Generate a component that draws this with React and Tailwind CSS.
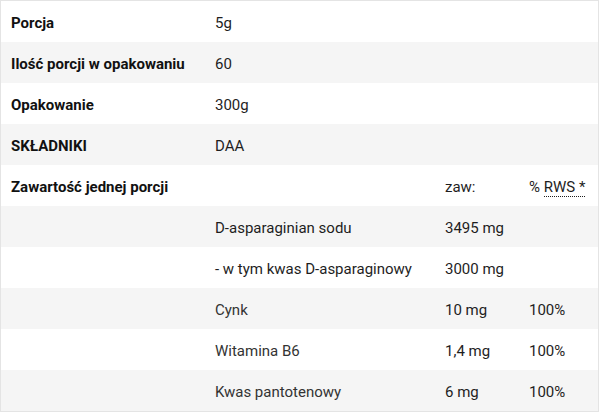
import React from "react";

const rows = [
  { a: "Porcja", b: "5g", bold: true },
  { a: "Ilość porcji w opakowaniu", b: "60", bold: true },
  { a: "Opakowanie", b: "300g", bold: true },
  { a: "SKŁADNIKI", b: "DAA", bold: true },
  { a: "Zawartość jednej porcji", b: "", c: "zaw:", d: "rws", bold: true },
  { a: "", b: "D-asparaginian sodu", c: "3495 mg", d: "" },
  { a: "", b: "- w tym kwas D-asparaginowy", c: "3000 mg", d: "" },
  { a: "", b: "Cynk", c: "10 mg", d: "100%", muted: true },
  { a: "", b: "Witamina B6", c: "1,4 mg", d: "100%", muted: true },
  { a: "", b: "Kwas pantotenowy", c: "6 mg", d: "100%", muted: true },
];

export default function App() {
  return (
    <div className="w-[601px] h-[413px] bg-white" style={{ fontFamily: "Roboto, 'Noto Sans', sans-serif" }}>
      <div className="w-[599px] border border-[#e4e4e4] text-[15px] text-[#1e1e1e]">
        {rows.map((r, i) => (
          <div
            key={i}
            className={`grid grid-cols-[204px_230px_84px_1fr] h-[41px] items-center pt-[3px] ${i % 2 === 1 ? "bg-[#f5f5f5]" : "bg-white"}`}
          >
            <div className={`pl-[10px] ${r.bold ? "font-bold text-[#111]" : ""}`}>{r.a}</div>
            <div className={`pl-[10px] ${r.muted ? "text-[#333]" : ""}`}>{r.b}</div>
            <div className="pl-[10px]">{r.c}</div>
            <div className="pl-[10px]">
              {r.d === "rws" ? (
                <span>
                  %{" "}
                  <span className="border-b border-dotted border-[#1e1e1e]">RWS *</span>
                </span>
              ) : (
                r.d
              )}
            </div>
          </div>
        ))}
      </div>
    </div>
  );
}
